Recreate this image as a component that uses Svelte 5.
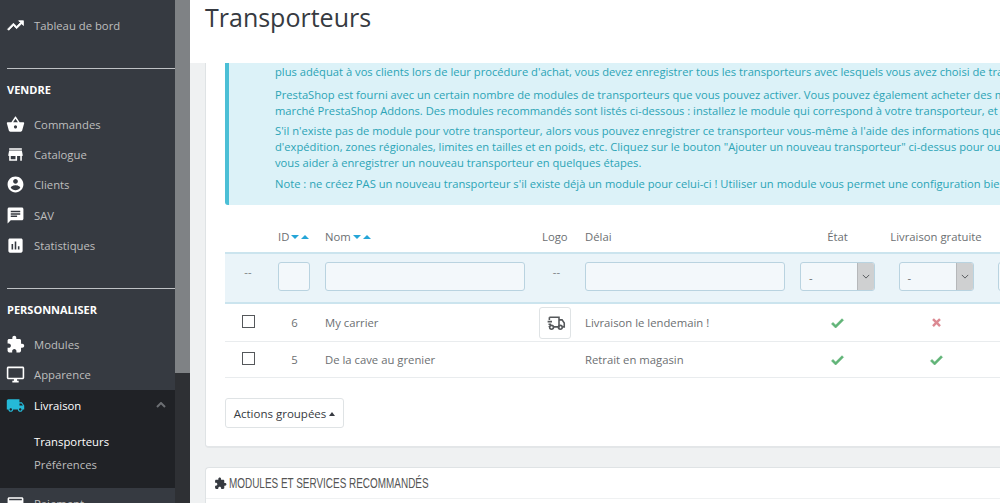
<script>
// material icon paths, 24x24 viewBox
const icons = {
	trend: 'M16 6l2.29 2.29-4.88 4.88-4-4L2 16.59 3.41 18l6-6 4 4 6.3-6.29L22 12V6z',
	basket: 'M17.21 9l-4.38-6.56c-.19-.28-.51-.42-.83-.42-.32 0-.64.14-.83.43L6.79 9H2c-.55 0-1 .45-1 1 0 .09.01.18.04.27l2.54 9.27c.23.84 1 1.46 1.92 1.46h13c.92 0 1.69-.62 1.93-1.46l2.54-9.27L23 10c0-.55-.45-1-1-1h-4.79zM9 9l3-4.4L15 9H9zm3 8c-1.1 0-2-.9-2-2s.9-2 2-2 2 .9 2 2-.9 2-2 2z',
	store: 'M20 4H4v2h16V4zm1 10v-2l-1-5H4l-1 5v2h1v6h10v-6h4v6h2v-6h1zm-9 4H6v-4h6v4z',
	account: 'M12 2C6.48 2 2 6.48 2 12s4.48 10 10 10 10-4.48 10-10S17.52 2 12 2zm0 3c1.66 0 3 1.34 3 3s-1.34 3-3 3-3-1.34-3-3 1.34-3 3-3zm0 14.2c-2.5 0-4.71-1.28-6-3.22.03-1.99 4-3.08 6-3.08 1.99 0 5.97 1.09 6 3.08-1.29 1.94-3.5 3.22-6 3.22z',
	chat: 'M20 2H4c-1.1 0-1.99.9-1.99 2L2 22l4-4h14c1.1 0 2-.9 2-2V4c0-1.1-.9-2-2-2zM6 9h12v2H6V9zm8 5H6v-2h8v2zm4-6H6V6h12v2z',
	stats: 'M19 3H5c-1.1 0-2 .9-2 2v14c0 1.1.9 2 2 2h14c1.1 0 2-.9 2-2V5c0-1.1-.9-2-2-2zM9 17H7v-7h2v7zm4 0h-2V7h2v10zm4 0h-2v-4h2v4z',
	puzzle: 'M20.5 11H19V7c0-1.1-.9-2-2-2h-4V3.5C13 2.12 11.88 1 10.5 1S8 2.12 8 3.5V5H4c-1.1 0-1.99.9-1.99 2v3.8H3.5c1.49 0 2.7 1.21 2.7 2.7s-1.21 2.7-2.7 2.7H2V20c0 1.1.9 2 2 2h3.8v-1.5c0-1.49 1.21-2.7 2.7-2.7 1.49 0 2.7 1.21 2.7 2.7V22H17c1.1 0 2-.9 2-2v-4h1.5c1.38 0 2.5-1.12 2.5-2.5S21.88 11 20.5 11z',
	desktop: 'M21 2H3c-1.1 0-2 .9-2 2v12c0 1.1.9 2 2 2h7v2H8v2h8v-2h-2v-2h7c1.1 0 2-.9 2-2V4c0-1.1-.9-2-2-2zm0 14H3V4h18v12z',
	truck: 'M20 8h-3V4H3c-1.1 0-2 .9-2 2v11h2c0 1.66 1.34 3 3 3s3-1.34 3-3h6c0 1.66 1.34 3 3 3s3-1.34 3-3h2v-5l-3-4zM6 18.5c-.83 0-1.5-.67-1.5-1.5s.67-1.5 1.5-1.5 1.5.67 1.5 1.5-.67 1.5-1.5 1.5zm13.5-9l1.96 2.5H17V9.5h2.5zm-1.5 9c-.83 0-1.5-.67-1.5-1.5s.67-1.5 1.5-1.5 1.5.67 1.5 1.5-.67 1.5-1.5 1.5z',
	card: 'M20 4H4c-1.11 0-1.99.89-1.99 2L2 18c0 1.11.89 2 2 2h16c1.11 0 2-.89 2-2V6c0-1.11-.89-2-2-2zm0 14H4v-6h16v6zm0-10H4V6h16v2z',
	check: 'M9 16.2L4.8 12l-2.3 2.3L9 20.8 21.5 8.3 19.2 6z',
	cross: 'M19 7.8L16.2 5 12 9.2 7.8 5 5 7.8 9.2 12 5 16.2 7.8 19 12 14.8 16.2 19 19 16.2 14.8 12z'
};

const sell = [
	{ label: 'Commandes', icon: 'basket' },
	{ label: 'Catalogue', icon: 'store' },
	{ label: 'Clients', icon: 'account' },
	{ label: 'SAV', icon: 'chat' },
	{ label: 'Statistiques', icon: 'stats' }
];

const carriers = [
	{ id: 6, name: 'My carrier', logo: true, delay: 'Livraison le lendemain !', active: true, free: false },
	{ id: 5, name: 'De la cave au grenier', logo: false, delay: 'Retrait en magasin', active: true, free: true }
];
</script>

{#snippet icon(name, cls = '')}
	<svg class="icon {cls}" viewBox="0 0 24 24" aria-hidden="true"><path d={icons[name]} /></svg>
{/snippet}

{#snippet sortArrows()}
	<span class="sort"><i class="down"></i><i class="up"></i></span>
{/snippet}

{#snippet selectBox()}
	<div class="select"><span>-</span><b><svg viewBox="0 0 10 6"><path d="M1 1l4 4 4-4" /></svg></b></div>
{/snippet}

<div class="page">
	<nav class="sidebar">
		<a class="item first">{@render icon('trend', 'bold')}Tableau de bord</a>

		<div class="section">
			<h4>VENDRE</h4>
			{#each sell as entry}
				<a class="item">{@render icon(entry.icon)}{entry.label}</a>
			{/each}
		</div>

		<div class="section second">
			<h4>PERSONNALISER</h4>
			<a class="item">{@render icon('puzzle')}Modules</a>
			<a class="item">{@render icon('desktop')}Apparence</a>
			<div class="active">
				<a class="item current">
					{@render icon('truck', 'blue')}Livraison
					<svg class="chevron" viewBox="0 0 10 6"><path d="M1 5l4-4 4 4" /></svg>
				</a>
				<a class="sub on">Transporteurs</a>
				<a class="sub">Préférences</a>
			</div>
			<a class="item">{@render icon('card')}Paiement</a>
		</div>
	</nav>

	<div class="scrollbar"><div class="thumb"></div></div>

	<main>
		<header><h1>Transporteurs</h1></header>

		<div class="content">
			<section class="panel list">
				<div class="alert">
					<p>
						<span>plus adéquat à vos clients lors de leur procédure d'achat, vous devez enregistrer tous les transporteurs avec lesquels vous avez choisi de travailler.</span>
					</p>
					<p>
						<span>PrestaShop est fourni avec un certain nombre de modules de transporteurs que vous pouvez activer. Vous pouvez également acheter des modules</span>
						<span>marché PrestaShop Addons. Des modules recommandés sont listés ci-dessous : installez le module qui correspond à votre transporteur, et</span>
					</p>
					<p>
						<span>S'il n'existe pas de module pour votre transporteur, alors vous pouvez enregistrer ce transporteur vous-même à l'aide des informations que</span>
						<span>d'expédition, zones régionales, limites en tailles et en poids, etc. Cliquez sur le bouton "Ajouter un nouveau transporteur" ci-dessus pour ouvrir</span>
						<span>vous aider à enregistrer un nouveau transporteur en quelques étapes.</span>
					</p>
					<p>
						<span>Note : ne créez PAS un nouveau transporteur s'il existe déjà un module pour celui-ci ! Utiliser un module vous permet une configuration bien</span>
					</p>
				</div>

				<table>
					<colgroup>
						<col style="width:46px" /><col style="width:47px" /><col style="width:217px" /><col style="width:43px" />
						<col style="width:215px" /><col style="width:89px" /><col style="width:108px" /><col style="width:90px" />
					</colgroup>
					<thead>
						<tr class="heads">
							<th></th>
							<th>ID{@render sortArrows()}</th>
							<th>Nom{@render sortArrows()}</th>
							<th>Logo</th>
							<th>Délai</th>
							<th class="center">État</th>
							<th class="center">Livraison gratuite</th>
							<th></th>
						</tr>
						<tr class="filters">
							<th class="center dash">--</th>
							<th><div class="input id"></div></th>
							<th><div class="input"></div></th>
							<th class="center dash">--</th>
							<th><div class="input"></div></th>
							<th>{@render selectBox()}</th>
							<th>{@render selectBox()}</th>
							<th>{@render selectBox()}</th>
						</tr>
					</thead>
					<tbody>
						{#each carriers as carrier}
							<tr>
								<td class="center"><span class="checkbox"></span></td>
								<td class="num">{carrier.id}</td>
								<td>{carrier.name}</td>
								<td class="logo-cell">
									{#if carrier.logo}
										<div class="logo">
											<svg viewBox="0 0 24 24">
												<path d="M5 6h11v11H10M16 9h3.5l2.5 3.5V17h-2M16 17h-1M5 6v3M3 11h5M4 14h3M5 16v1" />
												<circle cx="7.5" cy="17.5" r="2.2" /><circle cx="17.5" cy="17.5" r="2.2" />
											</svg>
										</div>
									{/if}
								</td>
								<td>{carrier.delay}</td>
								<td class="center">{@render icon(carrier.active ? 'check' : 'cross', carrier.active ? 'ok' : 'ko')}</td>
								<td class="center">{@render icon(carrier.free ? 'check' : 'cross', carrier.free ? 'ok' : 'ko')}</td>
								<td></td>
							</tr>
						{/each}
					</tbody>
				</table>

				<button type="button" class="bulk">Actions groupées <i class="caret"></i></button>
			</section>

			<section class="panel modules">
				<h3>{@render icon('puzzle')}<span>MODULES ET SERVICES RECOMMANDÉS</span></h3>
			</section>
		</div>
	</main>
</div>

<style>
	:global(body) {
		margin: 0;
		background: #eff1f2;
	}

	.page {
		display: flex;
		width: 1000px;
		height: 503px;
		overflow: hidden;
		font-family: 'Open Sans', 'Noto Sans', sans-serif;
		font-size: 11.3px;
		color: #6c6f72;
	}

	/* sidebar */
	.sidebar {
		flex: 0 0 175px;
		background: #363a41;
		padding-top: 10px;
		box-sizing: border-box;
	}

	.item {
		display: flex;
		align-items: center;
		gap: 9px;
		height: 30.25px;
		padding-left: 6px;
		color: #bebebe;
		font-size: 11.3px;
	}

	.item .icon {
		width: 19px;
		height: 19px;
		fill: #fff;
		flex: none;
	}

	.item .icon.bold {
		stroke: #fff;
		stroke-width: 1;
	}

	.section {
		margin: 28px 0 0 7px;
		border-top: 1px solid #bfc1c4;
		padding-top: 11px;
	}

	.section.second {
		margin-top: 27px;
	}

	.section h4 {
		margin: 0 0 9px;
		height: 20px;
		line-height: 20px;
		font-size: 11px;
		font-weight: 700;
		color: #fff;
	}

	.section.second h4 {
		margin-bottom: 10px;
	}

	.section .item {
		margin-left: -7px;
	}

	.active {
		margin-left: -7px;
		background: #202226;
		height: 98px;
		padding-bottom: 8px;
		box-sizing: border-box;
	}

	.active .item {
		margin-left: 0;
		height: 30px;
		color: #fff;
	}

	.chevron {
		width: 10px;
		height: 6px;
		margin-left: auto;
		margin-right: 9px;
		fill: none;
		stroke: #6c6f73;
		stroke-width: 2;
	}

	.item .icon.blue {
		fill: #25b9d7;
	}

	.sub {
		display: block;
		padding-left: 34px;
		height: 23px;
		line-height: 23px;
		color: #bebebe;
	}

	.sub.on {
		margin-top: 10px;
		color: #fff;
	}

	.scrollbar {
		flex: 0 0 15px;
		background: #2e3034;
	}

	.thumb {
		height: 373px;
		background: #7f8285;
	}

	/* main area */
	main {
		flex: 1;
		min-width: 0;
		display: flex;
		flex-direction: column;
	}

	header {
		flex: 0 0 63px;
		background: #fff;
		padding-left: 15px;
	}

	h1 {
		margin: 0;
		font-size: 25px;
		font-weight: 400;
		line-height: 35px;
		color: #363a41;
	}

	.content {
		padding: 0 0 0 15px;
	}

	.panel {
		background: #fff;
		border: 1px solid #dfe3e5;
		border-right: 0;
		border-radius: 4px 0 0 4px;
		box-sizing: border-box;
		width: 800px;
	}

	.list {
		height: 385px;
		border-top: 0;
		border-bottom: 2px solid #e3e6e8;
		padding-left: 19px;
		border-radius: 0 0 0 4px;
		overflow: hidden;
	}

	.alert {
		height: 142px;
		box-sizing: border-box;
		background: #dcf2f8;
		border-left: 4px solid #4bbfd6;
		border-radius: 0 0 0 3px;
		padding: 1px 0 0 46px;
		color: #2ba4b6;
		font-size: 11.2px;
		line-height: 16px;
		overflow: hidden;
	}

	.alert p {
		margin: 0 0 5px;
		white-space: nowrap;
	}

	.alert p:first-child {
		margin-bottom: 7px;
	}

	.alert p:nth-child(2) {
		margin-bottom: 4px;
	}

	.alert span {
		display: block;
	}

	table {
		table-layout: fixed;
		border-collapse: collapse;
		width: 855px;
		margin-top: 20px;
	}

	th {
		font-weight: 400;
		text-align: left;
		padding: 0 7px;
		font-size: 11.3px;
	}

	.center {
		text-align: center;
	}

	.heads th {
		height: 28px;
		padding-bottom: 5px;
		box-sizing: border-box;
		color: #6c6f72;
		white-space: nowrap;
	}

	.sort {
		display: inline-flex;
		gap: 2px;
		margin-left: 2px;
		vertical-align: 2px;
	}

	.sort i {
		width: 0;
		height: 0;
		border-left: 4px solid transparent;
		border-right: 4px solid transparent;
	}

	.sort .down {
		border-top: 4px solid #25a5d7;
	}

	.sort .up {
		border-bottom: 4px solid #25a5d7;
	}

	.filters th {
		height: 50px;
		box-sizing: border-box;
		padding-bottom: 3px;
		background: #eaf4f9;
		border-top: 2px solid #cbe4ee;
		border-bottom: 2px solid #cbe4ee;
	}

	.filters .dash {
		color: #7d8083;
		padding-bottom: 14px;
	}

	.input,
	.select {
		height: 29px;
		box-sizing: border-box;
		background: #f3f8fb;
		border: 1px solid #b9d3e0;
		border-radius: 3px;
	}

	.input {
		width: 200px;
	}

	.input.id {
		width: 32px;
	}

	.select {
		display: flex;
		width: 75px;
		overflow: hidden;
		margin: 0 auto;
	}

	.select span {
		flex: 1;
		padding-left: 8px;
		line-height: 30px;
	}

	.select b {
		flex: 0 0 16px;
		display: flex;
		align-items: center;
		justify-content: center;
		background: #cfd0d1;
		border-left: 1px solid #b6b8ba;
	}

	.select svg {
		width: 8px;
		height: 5px;
		fill: none;
		stroke: #55585b;
		stroke-width: 1.2;
	}

	td {
		padding: 0 7px;
		height: 37px;
		border-bottom: 1px solid #e9ecee;
		color: #6c6f72;
		font-size: 11.3px;
		vertical-align: middle;
	}

	tbody tr:last-child td {
		height: 35px;
	}

	.num {
		text-align: center;
		padding-right: 7px;
	}

	.checkbox {
		display: block;
		width: 11px;
		height: 11px;
		margin: 0 auto 3px;
		border: 1px solid #55585b;
		background: #fff;
	}

	.logo-cell {
		padding: 0;
	}

	.logo {
		width: 32px;
		height: 32px;
		margin-left: 4px;
		box-sizing: border-box;
		border: 1px solid #dfe3e5;
		border-radius: 3px;
		display: flex;
		align-items: center;
		justify-content: center;
	}

	.logo svg {
		width: 21px;
		height: 21px;
		fill: none;
		stroke: #55585b;
		stroke-width: 1.8;
	}

	td .icon {
		width: 15px;
		height: 15px;
		display: block;
		margin: 0 auto;
	}

	.icon.ok {
		fill: #5fb376;
		stroke: #5fb376;
		stroke-width: 1.2;
	}

	.icon.ko {
		fill: #dc8a93;
	}

	.bulk {
		display: block;
		margin-top: 20px;
		width: 119px;
		height: 30px;
		padding: 0;
		background: #fff;
		border: 1px solid #dfe3e5;
		border-radius: 3px;
		font: inherit;
		font-size: 11.5px;
		color: #363a41;
	}

	.caret {
		display: inline-block;
		border-left: 3.5px solid transparent;
		border-right: 3.5px solid transparent;
		border-bottom: 4px solid #363a41;
		vertical-align: 2px;
	}

	.modules {
		margin-top: 19px;
		height: 60px;
		border-radius: 4px 0 0 0;
	}

	.modules h3 {
		display: flex;
		align-items: center;
		gap: 2px;
		margin: 0;
		height: 30px;
		padding-left: 8px;
		border-bottom: 1px solid #eff1f2;
		font-family: 'Liberation Sans', sans-serif;
		font-size: 14px;
		font-weight: 400;
		color: #555;
		white-space: nowrap;
	}

	.modules h3 span {
		transform: scaleX(0.71);
		transform-origin: left center;
	}

	.modules .icon {
		width: 13px;
		height: 13px;
		fill: #363a41;
	}
</style>
